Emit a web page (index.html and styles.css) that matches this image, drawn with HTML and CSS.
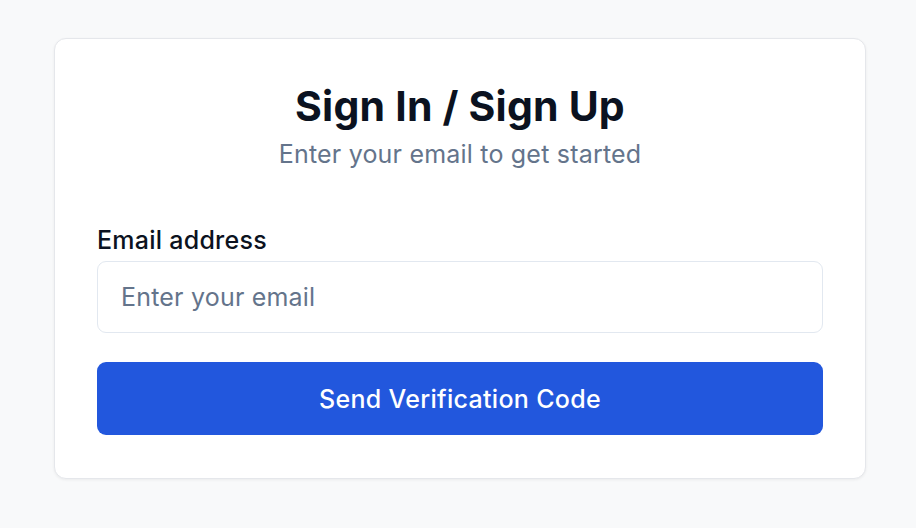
FILE: index.html
```html
<!DOCTYPE html>
<html lang="en">
<head>
<meta charset="utf-8">
<title>Sign In / Sign Up</title>
<link rel="stylesheet" href="styles.css">
</head>
<body>
<main class="page">
  <section class="card">
    <header class="card-header">
      <h1 class="title">Sign In / Sign Up</h1>
      <p class="subtitle">Enter your email to get started</p>
    </header>
    <form class="form">
      <div class="field">
        <label class="label" for="email">Email address</label>
        <input class="input" id="email" type="email" placeholder="Enter your email">
      </div>
      <button class="button" type="button">Send Verification Code</button>
    </form>
  </section>
</main>
</body>
</html>
```

FILE: styles.css
```css
* { box-sizing: border-box; }
html, body { margin: 0; padding: 0; }
body {
  background: #f8f9fa;
  font-family: Inter, "Noto Sans", sans-serif;
  color: #0f172a;
  width: 916px;
  height: 528px;
}
.page {
  padding: 38px 50px 0 54px;
}
.card {
  width: 812px;
  background: #ffffff;
  border: 1px solid #e5e7eb;
  border-radius: 12px;
  box-shadow: 0 1px 3px rgba(0,0,0,0.06);
  padding: 43px 42px 43px;
}
.card-header {
  text-align: center;
}
.title {
  margin: 0;
  font-size: 41px;
  line-height: 48px;
  font-weight: 700;
  color: #0b1220;
  letter-spacing: 0.2px;
}
.subtitle {
  margin: 8px 0 0;
  font-size: 25px;
  line-height: 32px;
  letter-spacing: 0.2px;
  color: #64748b;
}
.form {
  margin-top: 54px;
  display: flex;
  flex-direction: column;
  gap: 29px;
}
.field {
  display: flex;
  flex-direction: column;
  gap: 5px;
}
.label {
  font-size: 25px;
  line-height: 32px;
  letter-spacing: 0.25px;
  font-weight: 500;
  color: #0b1220;
}
.input {
  height: 72px;
  border: 1px solid #e2e8f0;
  border-radius: 9px;
  padding: 0 23px;
  font-family: inherit;
  font-size: 25px;
  letter-spacing: 0.2px;
  color: #0f172a;
  background: #fff;
  outline: none;
}
.input::placeholder { color: #64748b; }
.button {
  height: 73px;
  border: none;
  border-radius: 9px;
  background: #2257dd;
  color: #ffffff;
  font-family: inherit;
  font-size: 25px;
  letter-spacing: 0.3px;
  font-weight: 500;
}
```
